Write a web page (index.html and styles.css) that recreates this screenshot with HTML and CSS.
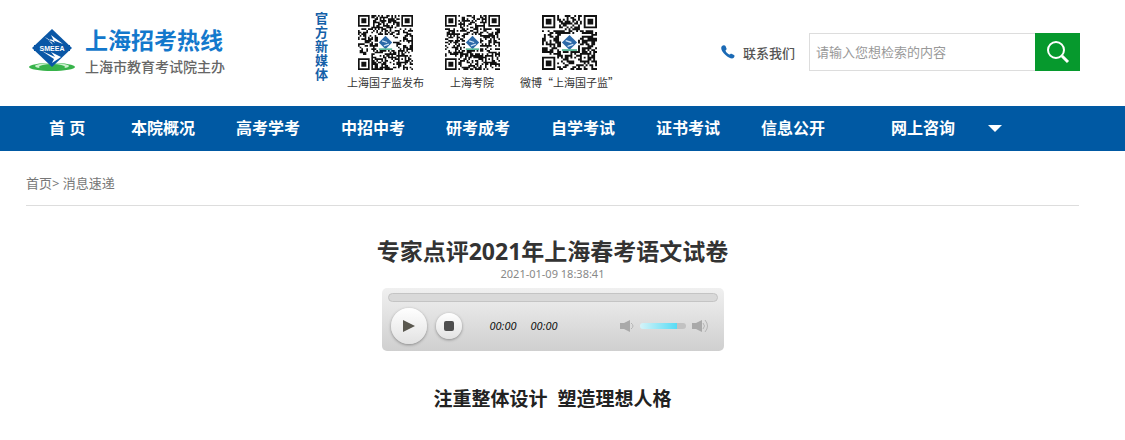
FILE: index.html
```
<!DOCTYPE html>
<html lang="zh-CN">
<head>
    <meta charset="UTF-8">
    <meta name="viewport" content="width=device-width, initial-scale=1.0">
    <title>专家点评2021年上海春考语文试卷</title>
    <link rel="stylesheet" href="styles.css">
</head>
<body>
    <header class="header">
        <a class="logo" href="#">
            <svg class="logo-mark" viewBox="0 0 48 44" width="48" height="44" aria-hidden="true">
                <ellipse cx="24" cy="38" rx="23" ry="4" fill="#37b34a"/>
                <ellipse cx="24" cy="37" rx="17" ry="3" fill="#c9efcd"/>
                <ellipse cx="24" cy="38" rx="13" ry="3" fill="#37b34a"/>
                <path d="M24 0 44 19 24 38 4 19Z" fill="#0a57a6"/>
                <path d="M17 8 27 14 23 6 35 15 22 10 25 16Z" fill="#fff"/>
                <path d="M14 22 27 28 23 23 33 28 24 34 26 30Z" fill="#fff"/>
                <path d="M18 10 30 16M16 25 24 31" stroke="#0a57a6" stroke-width="1" fill="none"/>
                <rect x="6" y="16" width="36" height="6" fill="#0a57a6"/>
                <text x="24" y="22" text-anchor="middle" class="logo-letters">SMEEA</text>
            </svg>
            <span class="logo-text">
                <span class="logo-name">上海招考热线</span>
                <span class="logo-sub">上海市教育考试院主办</span>
            </span>
        </a>

        <div class="media">
            <p class="media-title">官方新媒体</p>
            <ul class="qr-list">
                <li><svg class="qr" data-size="33" data-seed="17"></svg><span>上海国子监发布</span></li>
                <li><svg class="qr" data-size="33" data-seed="71"></svg><span>上海考院</span></li>
                <li><svg class="qr" data-size="29" data-seed="43"></svg><span>微博“上海国子监”</span></li>
            </ul>
        </div>

        <div class="tools">
            <a class="contact" href="#">
                <svg viewBox="0 0 14 14" width="14" height="14" aria-hidden="true">
                    <path d="M1 1C2 0 4 0 4.500 1L5.500 3.500C6 4.500 4.500 5 4.500 5.500 5 7.500 7 9 8.500 9.500 9 9.500 9.500 8.500 10.500 8.800L13 10C14 10.600 13.500 12 12.500 13 11 14 7.500 13 4.500 10 1 7-1 3 1 1Z" fill="#1b6ab5"/>
                </svg>
                联系我们
            </a>
            <form class="search">
                <input type="text" aria-label="检索" placeholder="请输入您想检索的内容">
                <button type="submit" aria-label="搜索">
                    <svg viewBox="0 0 24 24" width="24" height="24" fill="none" stroke="#fff" aria-hidden="true">
                        <circle cx="10" cy="10" r="8" stroke-width="2"/>
                        <path d="M16 16 22 22" stroke-width="3"/>
                    </svg>
                </button>
            </form>
        </div>
    </header>

    <nav class="main-nav">
        <ul>
            <li class="home"><a href="#">首 页</a></li>
            <li><a href="#">本院概况</a></li>
            <li><a href="#">高考学考</a></li>
            <li><a href="#">中招中考</a></li>
            <li><a href="#">研考成考</a></li>
            <li><a href="#">自学考试</a></li>
            <li><a href="#">证书考试</a></li>
            <li><a href="#">信息公开</a></li>
            <li class="consult">
                <a href="#">网上咨询
                    <svg viewBox="0 0 14 7" width="14" height="7" aria-hidden="true"><path d="M0 0H14L7 7Z" fill="#fff"/></svg>
                </a>
            </li>
        </ul>
    </nav>

    <main class="content">
        <div class="breadcrumb"><a href="#">首页</a>&gt; <a href="#">消息速递</a></div>

        <article class="article">
            <h1>专家点评2021年上海春考语文试卷</h1>
            <p class="date">2021-01-09 18:38:41</p>

            <div class="player">
                <input class="seek" type="range" min="0" max="100" value="0" aria-label="播放进度">
                <div class="controls">
                    <button class="play" type="button" aria-label="播放">
                        <svg viewBox="0 0 12 12" width="12" height="12"><path d="M0 0 12 6 0 12Z" fill="#5a584f"/></svg>
                    </button>
                    <button class="stop" type="button" aria-label="停止">
                        <svg viewBox="0 0 10 10" width="10" height="10"><rect width="10" height="10" rx="2" fill="#4e4e4e"/></svg>
                    </button>
                    <div class="times"><span>00:00</span><span>00:00</span></div>
                    <div class="volume">
                        <svg viewBox="0 0 14 12" width="14" height="12" aria-hidden="true">
                            <path d="M0 3H4L10 0V12L4 9H0Z" fill="#a9a9a9"/>
                            <path d="M11 3Q15 6 11 9" fill="none" stroke="#b5b5b5"/>
                        </svg>
                        <input type="range" min="0" max="100" value="80" aria-label="音量">
                        <svg viewBox="0 0 17 14" width="17" height="14" aria-hidden="true">
                            <path d="M0 4H4L10 1V13L4 10H0Z" fill="#a9a9a9"/>
                            <path d="M11 4Q14 7 11 10M13 1Q18 7 13 13" fill="none" stroke="#b5b5b5"/>
                        </svg>
                    </div>
                </div>
            </div>

            <h2>注重整体设计&nbsp; 塑造理想人格</h2>
        </article>
    </main>

    <script src="qr.js"></script>
</body>
</html>
```
FILE: styles.css
```
/* General Reset */
* {
    margin: 0;
    padding: 0;
    box-sizing: border-box;
}

body {
    font-family: "Noto Sans", "Noto Sans CJK SC", sans-serif;
    font-size: 13px;
    background-color: #fff;
    color: #333;
}

a {
    color: inherit;
    text-decoration: none;
}

ul {
    list-style: none;
}

svg {
    display: block;
    flex: none;
}

/* Header */
.header {
    display: flex;
    align-items: flex-start;
    height: 106px;
    padding: 0 45px 0 28px;
}

.logo {
    display: flex;
    gap: 9px;
    padding-top: 25px;
    white-space: nowrap;
}

.logo-mark {
    margin-top: 4px;
}

.logo-letters {
    font: bold 7px "Liberation Sans", sans-serif;
    fill: #fff;
}

.logo-text {
    display: flex;
    flex-direction: column;
}

.logo-name {
    font-size: 23px;
    line-height: 30px;
    font-weight: bold;
    color: #1378cc;
}

.logo-sub {
    font-size: 14px;
    line-height: 24px;
    font-weight: 500;
    color: #666;
}

.media {
    display: flex;
    gap: 18px;
    padding-top: 11px;
    margin-left: 90px;
}

.media-title {
    width: 14px;
    font-size: 13px;
    line-height: 14px;
    font-weight: bold;
    color: #1460a8;
}

.qr-list {
    display: flex;
    gap: 20px;
    padding-top: 4px;
}

.qr-list li {
    display: flex;
    flex-direction: column;
    align-items: center;
    min-width: 56px;
    font-family: "Noto Sans CJK SC", sans-serif;
    font-size: 11px;
    line-height: 24px;
    white-space: nowrap;
}

.qr {
    width: 55px;
    height: 55px;
}

.tools {
    display: flex;
    gap: 14px;
    padding-top: 33px;
    margin-left: auto;
}

.contact {
    display: flex;
    align-items: center;
    gap: 8px;
    font-weight: 500;
    color: #555;
    white-space: nowrap;
}

.search {
    display: flex;
}

.search input {
    width: 226px;
    height: 38px;
    padding: 0 6px;
    border: 1px solid #ddd;
    border-right: none;
    font: inherit;
}

.search input::placeholder {
    color: #999;
}

.search button {
    display: flex;
    align-items: center;
    justify-content: center;
    width: 45px;
    height: 38px;
    border: none;
    background-color: #06992d;
    cursor: pointer;
}

/* Navigation */
.main-nav {
    background-color: #0059a3;
}

.main-nav ul {
    display: flex;
    gap: 41px;
    padding-left: 49px;
}

.main-nav a {
    display: block;
    font-size: 16px;
    line-height: 45px;
    font-weight: bold;
    color: #fff;
    white-space: nowrap;
}

.main-nav .home {
    width: 41px;
}

.main-nav .consult {
    margin-left: 25px;
}

.main-nav .consult a {
    display: flex;
    align-items: center;
    gap: 33px;
}

/* Content */
.content {
    padding: 0 46px 0 26px;
}

.breadcrumb {
    padding: 21px 0 11px;
    line-height: 22px;
    color: #777;
    border-bottom: 1px solid #ddd;
}

.article {
    padding-top: 30px;
    text-align: center;
}

.article h1 {
    font-size: 23px;
    line-height: 30px;
}

.date {
    font-size: 11px;
    line-height: 16px;
    color: #888;
}

.article h2 {
    margin-top: 34px;
    font-size: 19px;
    line-height: 28px;
    color: #222;
}

/* Audio player */
.player {
    width: 342px;
    margin: 6px auto 0;
    padding: 5px 6px 7px;
    border-radius: 5px;
    background: linear-gradient(#f0f0f0, #cfcfcf);
}

.player input {
    display: block;
    appearance: none;
}

.player input::-webkit-slider-thumb {
    appearance: none;
    width: 0;
    height: 0;
}

.seek {
    width: 330px;
    height: 9px;
    border: 1px solid #c4c4c4;
    border-radius: 5px;
    background-color: #d9d9d9;
}

.controls {
    display: flex;
    align-items: center;
    padding: 6px 9px 0 3px;
}

.controls button {
    display: flex;
    align-items: center;
    justify-content: center;
    border: none;
    border-radius: 50%;
    background: linear-gradient(#fff, #e2e2e2);
    box-shadow: 0 1px 3px #888;
    cursor: pointer;
}

.controls .play {
    width: 36px;
    height: 36px;
}

.controls .stop {
    width: 26px;
    height: 26px;
    margin-left: 9px;
}

.times {
    display: flex;
    gap: 14px;
    margin-left: 28px;
    font-size: 11px;
    line-height: 16px;
    font-style: italic;
    color: #111;
}

.volume {
    display: flex;
    align-items: center;
    gap: 6px;
    margin-left: auto;
}

.volume input {
    width: 46px;
    height: 6px;
    border-radius: 3px;
    background: linear-gradient(to right, #d5f3f8, #58dcf5 80%, #c2c2c2 80%);
}
```
FILE: qr.js
```
// Draws the QR blocks in the header
function drawQr(svg) {
    const n = Number(svg.dataset.size);
    let seed = Number(svg.dataset.seed);
    let path = '';

    function random() {
        seed = (seed * 16807) % 2147483647;
        return seed / 2147483647;
    }

    for (let i = 0; i < 10; i++) random();

    // ring number around a centre point
    function ring(x, y, cx, cy) {
        return Math.max(Math.abs(x - cx), Math.abs(y - cy));
    }

    for (let y = 0; y < n; y++) {
        for (let x = 0; x < n; x++) {
            const corner = Math.min(ring(x, y, 3, 3), ring(x, y, n - 4, 3), ring(x, y, 3, n - 4));
            const align = ring(x, y, n - 7, n - 7);
            let dark = random() < 0.52;
            if (corner <= 4) dark = corner !== 2 && corner !== 4;
            else if (align <= 2) dark = align !== 1;
            if (dark) path += 'M' + x + ' ' + y + 'h1v1h-1z';
        }
    }

    svg.setAttribute('viewBox', '0 0 ' + n + ' ' + n);
    svg.innerHTML = '<path d="' + path + '" fill="#111"/>' +
        '<g transform="translate(' + n / 2 + ' ' + n / 2 + ')">' +
        '<rect x="-4.5" y="-4.5" width="9" height="9" fill="#fff"/>' +
        '<path d="M0-4 4 0 0 4-4 0Z" fill="#2c69a8"/>' +
        '<path d="M-2-1 1 0M-1 2 2 1" stroke="#cfe2f5" stroke-width=".7"/>' +
        '<path d="M-4 4H4" stroke="#5cb89a"/></g>';
}

document.querySelectorAll('.qr').forEach(drawQr);
```
